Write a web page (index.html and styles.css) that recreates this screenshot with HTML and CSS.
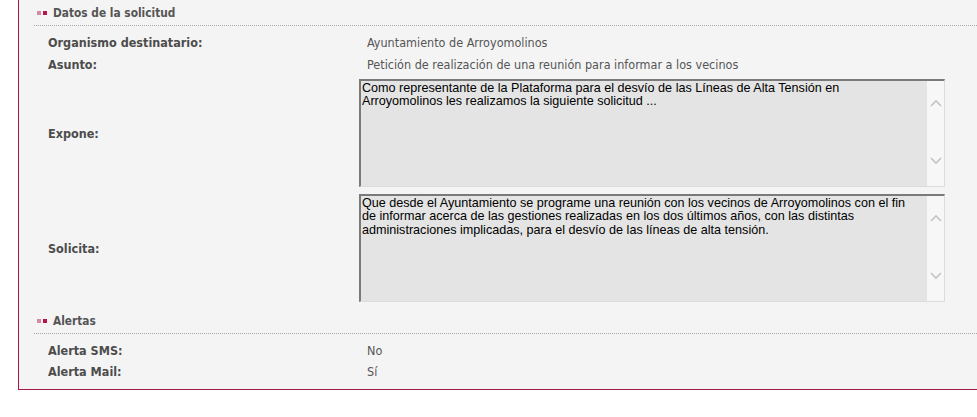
FILE: index.html
```html
<!DOCTYPE html>
<html lang="es">
<head>
<meta charset="utf-8">
<title>Datos de la solicitud</title>
<link rel="stylesheet" href="styles.css">
</head>
<body>
<div class="panel">
  <div class="section-head"><span class="bullets"><i class="b1"></i><i class="b2"></i></span>Datos de la solicitud</div>
  <div class="rows first">
    <div class="row"><div class="label">Organismo destinatario:</div><div class="value">Ayuntamiento de Arroyomolinos</div></div>
    <div class="row"><div class="label">Asunto:</div><div class="value">Petición de realización de una reunión para informar a los vecinos</div></div>
    <div class="row area-row"><div class="label">Expone:</div>
      <div class="area"><div class="area-text">Como representante de la Plataforma para el desvío de las Líneas de Alta Tensión en<br>Arroyomolinos les realizamos la siguiente solicitud ...</div>
        <div class="sbar"><svg class="up" width="12" height="8" viewBox="0 0 12 8"><path d="M1 7 L6 2 L11 7" fill="none" stroke="#c4c4c4" stroke-width="1.6"/></svg><svg class="down" width="12" height="8" viewBox="0 0 12 8"><path d="M1 1 L6 6 L11 1" fill="none" stroke="#c4c4c4" stroke-width="1.6"/></svg></div>
      </div>
    </div>
    <div class="row area-row"><div class="label">Solicita:</div>
      <div class="area"><div class="area-text">Que desde el Ayuntamiento se programe una reunión con los vecinos de Arroyomolinos con el fin<br>de informar acerca de las gestiones realizadas en los dos últimos años, con las distintas<br>administraciones implicadas, para el desvío de las líneas de alta tensión.</div>
        <div class="sbar"><svg class="up" width="12" height="8" viewBox="0 0 12 8"><path d="M1 7 L6 2 L11 7" fill="none" stroke="#c4c4c4" stroke-width="1.6"/></svg><svg class="down" width="12" height="8" viewBox="0 0 12 8"><path d="M1 1 L6 6 L11 1" fill="none" stroke="#c4c4c4" stroke-width="1.6"/></svg></div>
      </div>
    </div>
  </div>
  <div class="section-head second"><span class="bullets"><i class="b1"></i><i class="b2"></i></span>Alertas</div>
  <div class="rows alerts">
    <div class="row small"><div class="label">Alerta SMS:</div><div class="value">No</div></div>
    <div class="row small"><div class="label">Alerta Mail:</div><div class="value">Sí</div></div>
  </div>
</div>
</body>
</html>
```

FILE: styles.css
```css
html, body {
  margin: 0;
  padding: 0;
  background: #ffffff;
}
body {
  font-family: "DejaVu Sans Condensed", "DejaVu Sans", sans-serif;
  font-size: 12.5px;
  color: #555555;
}
.panel {
  margin-left: 18px;
  background: #f4f4f4;
  border-left: 1px solid #a3174c;
  border-bottom: 1px solid #a3174c;
  padding: 0 0 7px 15px;
}
.section-head {
  display: flex;
  align-items: center;
  height: 24px;
  padding-top: 1px;
  border-bottom: 1px dotted #a8a8a8;
  font-weight: bold;
  color: #555555;
  font-size: 11.8px;
}
.section-head.second {
  padding-top: 4px;
}
.bullets {
  display: flex;
  gap: 2px;
  margin-left: 3px;
  margin-right: 6px;
}
.bullets i {
  display: block;
  width: 4px;
  height: 4px;
}
.bullets .b1 { background: #d48aa6; }
.bullets .b2 { background: #b8144d; }
.rows.first { padding-top: 5px; }
.rows.alerts { padding-top: 6px; }
.row {
  display: grid;
  grid-template-columns: 325px 586px;
  align-items: center;
  height: 22px;
}
.row.small { height: 21px; }
.label {
  padding-left: 14px;
  font-weight: bold;
  color: #4c4c4c;
}
.value {
  padding-left: 8px;
  color: #555555;
}
.area-row {
  height: auto;
  padding: 4px 0 3px;
}
.area {
  display: flex;
  height: 108px;
  box-sizing: border-box;
  border-top: 2px solid #7a7a7a;
  border-left: 2px solid #7a7a7a;
  border-right: 1px solid #dcdcdc;
  border-bottom: 1px solid #dcdcdc;
  background: #e4e4e4;
}
.area-text {
  flex: 1;
  padding: 1px 1px 0;
  font-family: "Liberation Sans", Arial, sans-serif;
  font-size: 12.6px;
  line-height: 13.3px;
  color: #000000;
  white-space: nowrap;
  overflow: hidden;
}
.sbar {
  width: 17px;
  background: #f7f7f7;
  display: flex;
  flex-direction: column;
  align-items: center;
}
.sbar .up { margin-top: 18px; }
.sbar .down { margin-top: 50px; }
```
